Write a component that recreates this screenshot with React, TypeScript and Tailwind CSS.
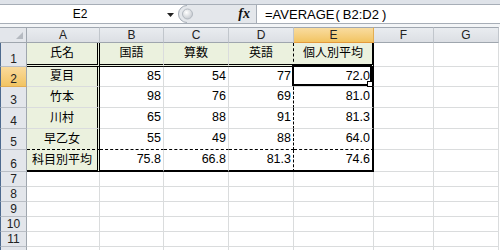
import React from "react";

const cols = ["A", "B", "C", "D", "E", "F", "G"];

const table: string[][] = [
  ["氏名", "国語", "算数", "英語", "個人別平均"],
  ["夏目", "85", "54", "77", "72.0"],
  ["竹本", "98", "76", "69", "81.0"],
  ["川村", "65", "88", "91", "81.3"],
  ["早乙女", "55", "49", "88", "64.0"],
  ["科目別平均", "75.8", "66.8", "81.3", "74.6"],
];

function rightBorder(r: number, c: number): string {
  if (r <= 6 && c === 0) return "border-r-[3px] [border-right-style:double]! border-r-black";
  if (r <= 6 && c === 3) return "border-r [border-right-style:dashed]! border-r-black";
  if (r <= 6 && c === 4) return "border-r-2 border-r-black";
  return "border-r border-r-[#dadcdd]";
}

function bottomBorder(r: number, c: number): string {
  if (c <= 4 && r === 1) return "border-b-[3px] [border-bottom-style:double]! border-b-black";
  if (c <= 4 && r === 5) return "border-b [border-bottom-style:dashed]! border-b-black";
  if (c <= 4 && r === 6) return "border-b-2 border-b-black";
  return "border-b border-b-[#dadcdd]";
}

function DataCell({ r, c }: { r: number; c: number }) {
  const inTable = r <= 6 && c <= 4;
  const text = inTable ? table[r - 1][c] : "";
  const green = inTable && (r === 1 || c === 0);
  const isNum = inTable && r >= 2 && c >= 1;
  const selected = r === 2 && c === 4;
  return (
    <div
      className={`relative flex items-center ${rightBorder(r, c)} ${bottomBorder(r, c)} ${
        green ? "bg-[#ebf1de]" : "bg-white"
      } ${isNum ? "justify-end pr-[2px] text-[12.5px]" : "justify-center text-[12px]"} leading-none`}
    >
      {text && <span className="pb-[1px] whitespace-nowrap">{text}</span>}
      {selected && (
        <div className="absolute -left-[2px] -top-[3px] right-0 bottom-0 border-2 border-black">
          <div className="absolute -right-[3px] -bottom-[3px] w-[6px] h-[6px] bg-white border border-black" />
        </div>
      )}
    </div>
  );
}

function RowHeader({ r }: { r: number }) {
  const sel = r === 2;
  return (
    <div
      className={`flex items-end justify-center pb-[1px] text-[12px] leading-none text-[#222] border-l border-l-[#4d6a8f] border-r border-r-[#9fa6ae] border-b ${
        sel
          ? "bg-linear-to-b from-[#f9da9b] to-[#f2c461] border-b-[#e3ad52]"
          : "bg-[#e3e6eb] border-b-[#b9bec5]"
      }`}
    >
      {r < 12 ? r : ""}
    </div>
  );
}

function FormulaBar() {
  return (
    <div className="h-[27px] bg-[#dfe3e9] pt-[4px]">
      <div className="h-[20px] flex border-y border-[#a7aeb7]">
        <div className="w-[178px] bg-white flex items-center">
          <div className="w-[160px] text-center text-[12px] leading-none">E2</div>
          <svg width="7" height="4" viewBox="0 0 7 4" className="ml-[7px] mt-[2px]">
            <path d="M0 0H7L3.5 4Z" fill="#222" />
          </svg>
        </div>
        <div className="w-[78px] flex bg-white">
          <svg width="26" height="18" viewBox="0 0 26 18">
            <defs>
              <radialGradient id="kg" cx="40%" cy="35%" r="70%">
                <stop offset="0" stopColor="#ffffff" />
                <stop offset="1" stopColor="#c2c7cd" />
              </radialGradient>
            </defs>
            <path d="M26 0H9A9 9 0 0 0 9 18H26Z" fill="#e4e7eb" />
            <path d="M9 0.5A8.5 8.5 0 0 0 9 17.5" fill="none" stroke="#a7aeb7" />
            <circle cx="9.5" cy="9" r="5" fill="url(#kg)" stroke="#b3b9c0" />
          </svg>
          <div className="flex-1 bg-[#e4e7eb] flex items-center justify-end pr-[6px]">
            <span className="font-['Liberation_Serif',serif] italic font-bold text-[14px] leading-none text-[#111]">
              fx
            </span>
          </div>
        </div>
        <div className="w-px bg-[#a7aeb7]" />
        <div className="flex-1 bg-white flex items-center pl-[8px] text-[13px] leading-none whitespace-nowrap">
          <span>=AVERAGE</span>
          <span className="pl-[1px] pr-[3px]">(</span>
          <span>B2:D2</span>
          <span className="pl-[3px]">)</span>
        </div>
      </div>
      <div className="h-[3px] bg-[#f3f5f7]" />
    </div>
  );
}

export default function App() {
  const rowNums = [1, 2, 3, 4, 5, 6, 7, 8, 9, 10, 11, 12];
  return (
    <div className="w-[500px] h-[250px] overflow-hidden bg-white text-black font-['Liberation_Sans','Noto_Sans_CJK_JP',sans-serif]">
      <FormulaBar />
      <div className="grid grid-cols-[27px_73px_64px_65px_65px_80px_60px_65px] grid-rows-[16px_24px_20px_21px_21px_21px_22px_15px_15px_15px_15px_15px_15px]">
        <div className="flex items-end justify-end pr-[3px] pb-[3px] bg-[#e3e6eb] border-t border-t-[#a0a7b0] border-r border-r-[#9fa6ae] border-b border-b-[#9fa6ae]">
          <svg width="7" height="7" viewBox="0 0 7 7">
            <path d="M7 0V7H0Z" fill="#b5bac1" />
          </svg>
        </div>
        {cols.map((l, i) => (
          <div
            key={l}
            className={`flex items-center justify-center text-[12px] leading-none text-[#222] border-t border-t-[#a0a7b0] border-r border-b ${
              i === 4
                ? "bg-linear-to-b from-[#f9dc9f] to-[#f2c461] border-r-[#e3ad52] border-b-[#e39a3c]"
                : "bg-linear-to-b from-[#e9ecf0] to-[#dcdfe4] border-r-[#c1c6cc] border-b-[#9fa6ae]"
            }`}
          >
            {l}
          </div>
        ))}
        {rowNums.map((r) => (
          <React.Fragment key={r}>
            <RowHeader r={r} />
            {cols.map((_, c) => (
              <DataCell key={c} r={r} c={c} />
            ))}
          </React.Fragment>
        ))}
      </div>
    </div>
  );
}
